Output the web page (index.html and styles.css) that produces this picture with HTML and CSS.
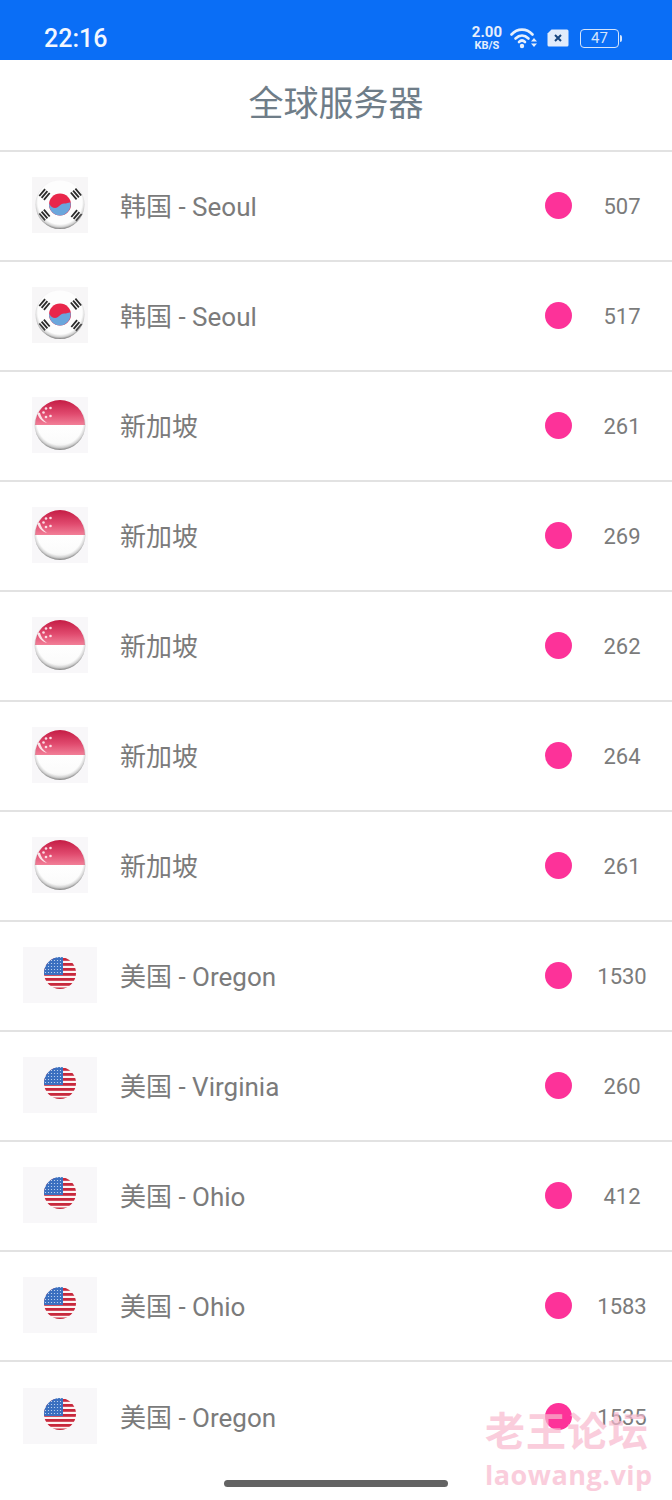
FILE: index.html
```html
<!DOCTYPE html>
<html lang="zh-CN">
<head>
  <meta charset="UTF-8" />
  <meta name="viewport" content="width=device-width, initial-scale=1.0" />
  <title>全球服务器</title>
  <link rel="stylesheet" href="styles.css">
</head>
<body>
  <svg class="defs" width="0" height="0">
    <defs>
      <radialGradient id="glass" cx="50%" cy="45%" r="55%">
        <stop offset="0.82" stop-color="#999" stop-opacity="0"/>
        <stop offset="0.92" stop-color="#888" stop-opacity="0.35"/>
        <stop offset="1" stop-color="#666" stop-opacity="0.85"/>
      </radialGradient>
      <linearGradient id="sgred" x1="0" y1="0" x2="0" y2="1">
        <stop offset="0" stop-color="#c41c44"/>
        <stop offset="0.55" stop-color="#e04a6e"/>
        <stop offset="1" stop-color="#f27f98"/>
      </linearGradient>
      <linearGradient id="sgwhite" x1="0" y1="0" x2="0" y2="1">
        <stop offset="0" stop-color="#fff"/>
        <stop offset="0.7" stop-color="#fbfbfb"/>
        <stop offset="1" stop-color="#e8e8e8"/>
      </linearGradient>
      <clipPath id="usclip"><circle cx="37" cy="26" r="16"/></clipPath>
      <pattern id="usstars" width="3" height="3" patternUnits="userSpaceOnUse">
        <circle cx="1.500" cy="1.500" r="0.600" fill="#cfe0f5"/>
      </pattern>
      <g id="trigram">
        <path d="M-4.500 -3h9M-4.500 0h9M-4.500 3h9" stroke="#2a2a2a" stroke-width="1.800"/>
      </g>

      <symbol id="flag-kr" viewBox="0 0 56 56">
        <rect width="56" height="56" fill="#f7f6f7"/>
        <circle cx="28" cy="27.500" r="24" fill="#fdfdfd"/>
        <use href="#trigram" transform="translate(12.500 17.500) rotate(-50)"/>
        <use href="#trigram" transform="translate(44 17) rotate(50)"/>
        <use href="#trigram" transform="translate(12.500 38) rotate(50)"/>
        <use href="#trigram" transform="translate(44.500 38.500) rotate(-50)"/>
        <circle cx="28" cy="27.500" r="11" fill="#e8264a"/>
        <path d="M17.100 26c1 3.500 3.500 5 6 5 4 0 4.500 -4.500 9 -4.500 3 0 5 -1.500 6.500 -1 1 6.500 -4 13 -10.600 13s-11.700 -6 -10.900 -12.500z" fill="#6aa6dc"/>
        <circle cx="28" cy="27.500" r="24.500" fill="url(#glass)"/>
      </symbol>

      <symbol id="flag-sg" viewBox="0 0 56 56">
        <rect width="56" height="56" fill="#f8f7f9"/>
        <path d="M3 28a25 25 0 0 1 50 0z" fill="url(#sgred)"/>
        <path d="M3 28a25 25 0 0 0 50 0z" fill="url(#sgwhite)"/>
        <path d="M5 15c1 5 4 9 10 11 -4 -3 -6 -6 -7 -10z" fill="#fbe3e8"/>
        <g fill="#fbdde4">
          <circle cx="14" cy="11.500" r="1.300"/>
          <circle cx="18.500" cy="11" r="1.300"/>
          <circle cx="11.500" cy="15.500" r="1.300"/>
          <circle cx="18.500" cy="19" r="1.300"/>
          <circle cx="14" cy="20" r="1.300"/>
        </g>
        <circle cx="28" cy="27.500" r="25.500" fill="url(#glass)"/>
      </symbol>

      <symbol id="flag-us" viewBox="0 0 74 56">
        <rect width="74" height="56" fill="#f8f7f9"/>
        <g clip-path="url(#usclip)">
          <rect x="21" y="10" width="32" height="33" fill="#fdf3f3"/>
          <g fill="#c8283c">
            <rect x="21" y="11" width="32" height="2.800"/>
            <rect x="21" y="16" width="32" height="2.800"/>
            <rect x="21" y="21" width="32" height="2.800"/>
            <rect x="21" y="26" width="32" height="2.800"/>
            <rect x="21" y="31" width="32" height="2.800"/>
            <rect x="21" y="36" width="32" height="2.800"/>
            <rect x="21" y="40.500" width="32" height="2.800"/>
          </g>
          <rect x="21" y="10" width="19" height="18" fill="#3a6fc0"/>
          <rect x="21" y="10" width="19" height="18" fill="url(#usstars)"/>
        </g>
      </symbol>
    </defs>
  </svg>

  <div class="status-bar">
    <span class="clock">22:16</span>
    <div class="status-icons">
      <div class="net-speed"><span class="net-num">2.00</span><span class="net-unit">KB/S</span></div>
      <svg class="wifi" width="28" height="22" viewBox="0 0 28 22">
        <g fill="none" stroke="#e6effc" stroke-width="2.600" stroke-linecap="round">
          <path d="M1.500 7.500c6 -6.500 15 -6.500 21 0"/>
          <path d="M5.500 11.500c4 -4 9 -4 13 0"/>
          <path d="M9 15c2 -2 4 -2 6 0"/>
        </g>
        <circle cx="12" cy="19" r="2.200" fill="#e6effc"/>
        <path d="M24 11l-3 3.500h6zM24 20l-3 -3.500h6z" fill="#e6effc"/>
      </svg>
      <svg class="sim" width="22" height="18" viewBox="0 0 22 18">
        <path d="M4.500 0.500h15.500a1.500 1.500 0 0 1 1.500 1.500v14a1.500 1.500 0 0 1 -1.500 1.500h-18a1.500 1.500 0 0 1 -1.500 -1.500v-11.500z" fill="#e2ecfb"/>
        <path d="M8 6l6 6M14 6l-6 6" stroke="#17457f" stroke-width="2"/>
      </svg>
      <div class="battery"><div class="battery-body">47</div><div class="battery-cap"></div></div>
    </div>
  </div>

  <header class="title-bar">全球服务器</header>

  <ul class="server-list">
    <li class="server"><svg class="flag"><use href="#flag-kr"/></svg><span class="name">韩国 - Seoul</span><i class="dot"></i><span class="ping">507</span></li>
    <li class="server"><svg class="flag"><use href="#flag-kr"/></svg><span class="name">韩国 - Seoul</span><i class="dot"></i><span class="ping">517</span></li>
    <li class="server"><svg class="flag"><use href="#flag-sg"/></svg><span class="name">新加坡</span><i class="dot"></i><span class="ping">261</span></li>
    <li class="server"><svg class="flag"><use href="#flag-sg"/></svg><span class="name">新加坡</span><i class="dot"></i><span class="ping">269</span></li>
    <li class="server"><svg class="flag"><use href="#flag-sg"/></svg><span class="name">新加坡</span><i class="dot"></i><span class="ping">262</span></li>
    <li class="server"><svg class="flag"><use href="#flag-sg"/></svg><span class="name">新加坡</span><i class="dot"></i><span class="ping">264</span></li>
    <li class="server"><svg class="flag"><use href="#flag-sg"/></svg><span class="name">新加坡</span><i class="dot"></i><span class="ping">261</span></li>
    <li class="server"><svg class="flag wide"><use href="#flag-us"/></svg><span class="name">美国 - Oregon</span><i class="dot"></i><span class="ping">1530</span></li>
    <li class="server"><svg class="flag wide"><use href="#flag-us"/></svg><span class="name">美国 - Virginia</span><i class="dot"></i><span class="ping">260</span></li>
    <li class="server"><svg class="flag wide"><use href="#flag-us"/></svg><span class="name">美国 - Ohio</span><i class="dot"></i><span class="ping">412</span></li>
    <li class="server"><svg class="flag wide"><use href="#flag-us"/></svg><span class="name">美国 - Ohio</span><i class="dot"></i><span class="ping">1583</span></li>
    <li class="server"><svg class="flag wide"><use href="#flag-us"/></svg><span class="name">美国 - Oregon</span><i class="dot"></i><span class="ping">1535</span></li>
  </ul>

  <div class="home-bar"></div>

  <div class="watermark">
    <div class="wm-title">老王论坛</div>
    <div class="wm-url">laowang.vip</div>
  </div>
</body>
</html>
```

FILE: styles.css
```css
html, body { margin: 0; padding: 0; }
body {
  position: relative;
  width: 672px;
  height: 1500px;
  overflow: hidden;
  background: white;
  font-family: Roboto, "Noto Sans CJK SC", sans-serif;
}
.defs { position: absolute; }

.status-bar {
  height: 60px;
  background: #0a6ef6;
  display: flex;
  align-items: center;
  justify-content: space-between;
  padding: 16px 50px 0 44px;
  box-sizing: border-box;
}
.clock { color: #f2f7ff; font-size: 25px; font-weight: 500; }
.status-icons { display: flex; align-items: center; gap: 7px; }
.net-speed {
  display: flex;
  flex-direction: column;
  align-items: center;
  color: #e6effc;
  font-weight: 700;
}
.net-num { font-size: 15px; line-height: 15px; }
.net-unit { font-size: 11px; line-height: 11px; }
.wifi { margin-left: 1px; }
.sim { margin-left: 2px; margin-right: 4px; }
.battery { display: flex; align-items: center; gap: 1px; }
.battery-body {
  width: 37px;
  height: 17px;
  border: 1px solid #d5e4fb;
  border-radius: 4px;
  color: #d5e4fb;
  font-size: 15px;
  line-height: 17px;
  text-align: center;
}
.battery-cap { width: 2px; height: 7px; background: #d5e4fb; border-radius: 0 2px 2px 0; }

.title-bar {
  height: 92px;
  box-sizing: border-box;
  padding-bottom: 10px;
  display: flex;
  align-items: center;
  justify-content: center;
  color: #6f7d88;
  font-size: 35px;
  border-bottom: 2px solid #e2e2e2;
}

.server-list { list-style: none; margin: 0; padding: 0; }
.server {
  height: 110px;
  box-sizing: border-box;
  border-bottom: 2px solid #e2e2e2;
  padding-bottom: 2px;
  display: flex;
  align-items: center;
  color: #7b7b7b;
}
.server:last-child { border-bottom: none; }
.flag {
  width: 56px;
  height: 56px;
  margin: 0 32px;
  flex: none;
}
.flag.wide { width: 74px; margin: 0 23px; }
.name { flex: 1; font-size: 26px; margin-top: -2px; }
.dot {
  width: 27px;
  height: 27px;
  border-radius: 50%;
  background: #fd3299;
}
.ping { width: 100px; margin-top: 2px; text-align: center; font-size: 22px; }

.home-bar {
  position: absolute;
  left: 224px;
  top: 1480px;
  width: 224px;
  height: 7px;
  border-radius: 4px;
  background: #636363;
}
.watermark {
  position: absolute;
  left: 485px;
  top: 1409px;
  color: #f8b9ce;
  opacity: 0.7;
  font-weight: 700;
}
.wm-title { font-size: 40px; line-height: 48px; letter-spacing: 1px; }
.wm-url { font-size: 27px; line-height: 36px; letter-spacing: 0.5px; font-family: "Open Sans", sans-serif; }
```
